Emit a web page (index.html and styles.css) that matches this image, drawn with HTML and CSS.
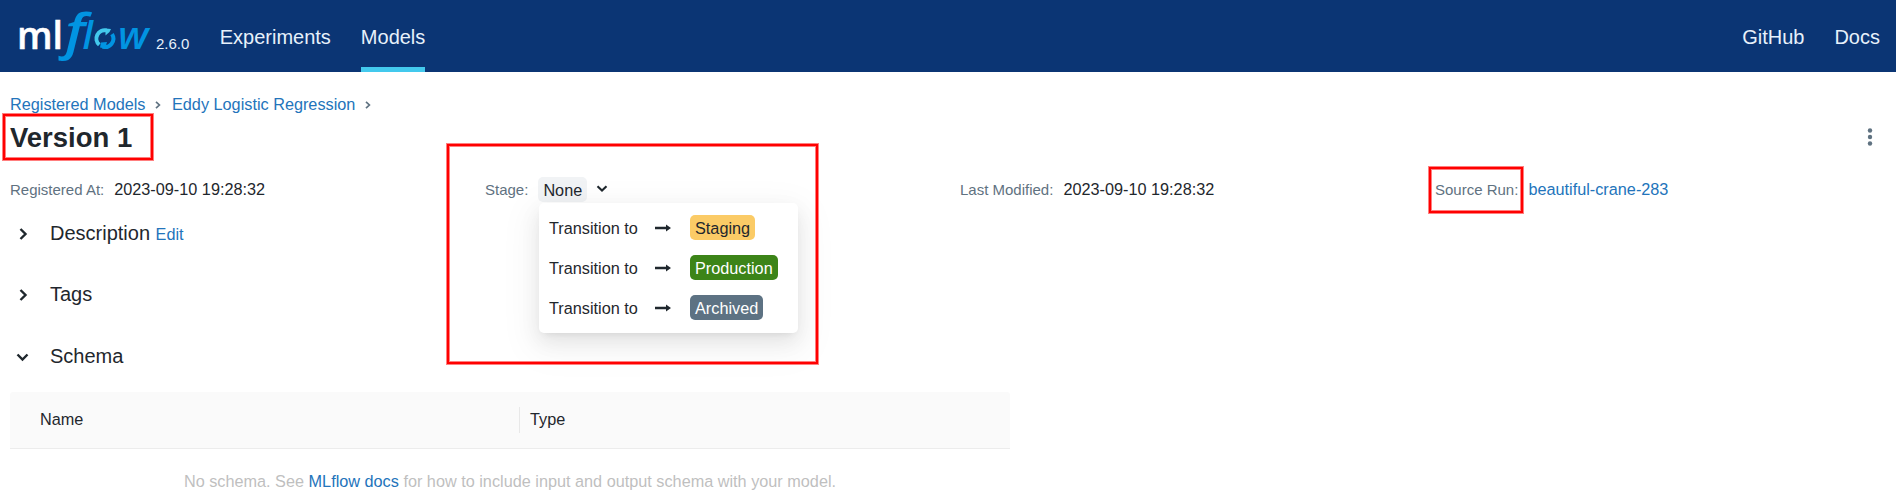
FILE: index.html
```html
<!DOCTYPE html>
<html lang="en">
<head>
<meta charset="utf-8">
<title>MLflow</title>
<link rel="stylesheet" href="styles.css">
</head>
<body>
<header class="topbar">
  <svg class="logo" width="155" height="72" viewBox="0 0 155 72" role="img" aria-label="mlflow">
    <text class="logo-ml" x="17" y="49" textLength="46" lengthAdjust="spacingAndGlyphs">ml</text>
    <text class="logo-f" transform="translate(65 48.500) scale(1.2 1)">f</text>
    <text class="logo-flow" x="82.500" y="49">l</text>
    <text class="logo-flow" x="118" y="49" textLength="30.500" lengthAdjust="spacingAndGlyphs">w</text>
    <path d="M99.300 44.800A8.300 8.300 0 0 1 106.500 30.400" fill="none" stroke="#43c9ed" stroke-width="4"/>
    <path d="M105.500 28.500l5.500.500-1.500 3-4 3.500z" fill="#43c9ed"/>
    <path d="M112 34.200A8.300 8.300 0 0 1 102.500 46.600" fill="none" stroke="#0194e2" stroke-width="4"/>
    <path d="M101 42.500l6-.500-2 6.500-5-1z" fill="#0194e2"/>
  </svg>
  <span class="release">2.6.0</span>
  <nav class="nav"><a class="nav-link">Experiments</a><a class="nav-link active">Models</a></nav>
  <nav class="nav right"><a class="nav-link">GitHub</a><a class="nav-link">Docs</a></nav>
</header>
<main class="page">
  <div class="crumbs">
    <a class="link">Registered Models</a>
    <svg class="crumb-arrow" width="6" height="8" viewBox="0 0 6 8"><path d="M1 .800l3.400 3.200L1 7.200"/></svg>
    <a class="link">Eddy Logistic Regression</a>
    <svg class="crumb-arrow" width="6" height="8" viewBox="0 0 6 8"><path d="M1 .800l3.400 3.200L1 7.200"/></svg>
  </div>
  <div class="title-row">
    <h1 class="title">Version 1</h1>
    <svg class="more" width="6" height="20" viewBox="0 0 6 20"><circle cx="3" cy="3.500" r="2.200"/><circle cx="3" cy="10" r="2.200"/><circle cx="3" cy="16.500" r="2.200"/></svg>
  </div>
  <div class="meta">
    <div class="meta-item"><span class="label">Registered At:</span><span>2023-09-10 19:28:32</span></div>
    <div class="meta-item stage"><span class="label">Stage:</span><span class="tag none">None</span>
      <svg class="chevron small" width="12" height="8" viewBox="0 0 12 8"><path d="M1.500 1.200l4.500 4.300 4.500-4.300"/></svg>
      <div class="menu">
        <div class="menu-item"><span class="move">Transition to</span><svg class="arrow" width="16" height="8" viewBox="0 0 16 8"><path d="M0 2.800h11V.400L16 4l-5 3.600V5.200H0z"/></svg><span class="tag staging">Staging</span></div>
        <div class="menu-item"><span class="move">Transition to</span><svg class="arrow" width="16" height="8" viewBox="0 0 16 8"><path d="M0 2.800h11V.400L16 4l-5 3.600V5.200H0z"/></svg><span class="tag production">Production</span></div>
        <div class="menu-item"><span class="move">Transition to</span><svg class="arrow" width="16" height="8" viewBox="0 0 16 8"><path d="M0 2.800h11V.400L16 4l-5 3.600V5.200H0z"/></svg><span class="tag archived">Archived</span></div>
      </div>
    </div>
    <div class="meta-item"><span class="label">Last Modified:</span><span>2023-09-10 19:28:32</span></div>
    <div class="meta-item"><span class="label">Source Run:</span><a class="link">beautiful-crane-283</a></div>
  </div>
  <section class="section"><svg class="chevron" width="14" height="14" viewBox="0 0 14 14"><path d="M5.500 2l5 5-5 5"/></svg><h2 class="heading">Description <a class="link edit">Edit</a></h2></section>
  <section class="section"><svg class="chevron" width="14" height="14" viewBox="0 0 14 14"><path d="M5.500 2l5 5-5 5"/></svg><h2 class="heading">Tags</h2></section>
  <section class="section"><svg class="chevron" width="14" height="14" viewBox="0 0 14 14"><path d="M2.500 4.500l5 5 5-5"/></svg><h2 class="heading">Schema</h2></section>
  <div class="table">
    <div class="thead"><div class="th">Name</div><div class="th type">Type</div></div>
    <p class="empty">No schema. See <a class="link">MLflow docs</a> for how to include input and output schema with your model.</p>
  </div>
</main>
<div class="mark mark-version"></div>
<div class="mark mark-stage"></div>
<div class="mark mark-source"></div>
</body>
</html>
```
FILE: styles.css
```css
* { box-sizing: border-box; }
body {
  margin: 0;
  height: 503px;
  overflow: hidden;
  position: relative;
  background: #fff;
  color: #1f272d;
  font: 16.25px/25px "Liberation Sans", Arial, sans-serif;
}
.topbar {
  height: 72px;
  display: flex;
  align-items: flex-start;
  padding: 0 16px 0 0;
  background: #0b3574;
  color: #e7f1fb;
}
.logo { flex: none; overflow: visible; }
.logo-ml { font: 600 38px "Open Sans", sans-serif; fill: #fff; stroke: #fff; stroke-width: .5px; }
.logo-f { font: italic 600 49px "Open Sans", sans-serif; fill: #0194e2; }
.logo-flow { font: italic 600 38px "Open Sans", sans-serif; fill: #0194e2; }
.release { width: 48px; padding: 32px 0 0 1px; font-size: 15px; line-height: 24px; }
.nav { display: flex; gap: 30px; height: 72px; margin-left: 16.7px; font-size: 20px; line-height: 74px; }
.nav.right { margin-left: auto; }
.nav-link { height: 72px; }
.nav-link.active { box-shadow: inset 0 -5px #43c9ed; }
.page { padding: 20px 10px 0; }
.link { color: #2374bb; }
.crumbs { display: flex; align-items: center; height: 25px; white-space: nowrap; }
.crumb-arrow { margin: 1px 10.5px 0 10px; fill: none; stroke: #5f7281; stroke-width: 1.7; }
.title-row { display: flex; justify-content: space-between; align-items: center; height: 40px; padding-right: 13px; }
.title { margin: 2px 0 0; font-size: 27.5px; line-height: 40px; }
.more { fill: #5f7281; }
.meta { display: grid; grid-template-columns: repeat(4, 475px); padding-top: 20px; height: 57px; }
.meta-item { display: flex; height: 25px; white-space: nowrap; }
.label { margin-right: 10px; color: #5f7281; font-size: 15px; line-height: 26px; }
.stage { position: relative; }
.tag { height: 25px; padding: 0 5px; border-radius: 5px; line-height: 26px; }
.none { background: #f1f3f5; }
.menu .tag { margin-top: -1px; }
.staging { background: #fbcb66; }
.production { background: #3c8418; color: #fff; }
.archived { background: #5d7283; color: #fff; }
.chevron { flex: none; margin-top: 2px; fill: none; stroke: #1f272d; stroke-width: 2.4; }
.chevron.small { margin: 8px 0 0 9px; stroke-width: 2.1; }
.menu {
  position: absolute;
  left: 54px;
  top: 26px;
  width: 259px;
  height: 130px;
  padding: 5px 10px;
  border-radius: 5px;
  background: #fff;
  box-shadow: 0 4px 8px -5px rgba(0,0,0,.12), 0 8px 20px rgba(0,0,0,.08), 0 11px 35px 10px rgba(0,0,0,.045);
}
.menu-item { display: flex; align-items: center; height: 40px; }
.move { width: 106px; }
.arrow { margin-right: 19px; fill: #1f272d; }
.section { display: flex; align-items: center; gap: 21px; height: 61.25px; padding-left: 5px; }
.section:first-of-type { margin-top: -11.5px; }
.heading { margin: 0; font-size: 20px; line-height: 30px; font-weight: 400; }
.edit { font-size: 16.25px; }
.table { width: 1000px; margin-top: 5.25px; }
.thead { display: flex; align-items: center; height: 57px; border-bottom: 1px solid #ececec; border-radius: 3px 3px 0 0; background: #fafafa; }
.th { width: 509px; padding-left: 30px; line-height: 25px; padding-bottom: 1px; }
.type { width: 491px; padding-left: 10px; border-left: 1px solid #e8e8e8; }
.empty { margin: 20px 0 0; color: #bfbfbf; text-align: center; }
.mark { position: absolute; border: 2px solid #f00; box-shadow: 0 0 0 1px rgba(255,0,0,.5), inset 0 0 0 1px rgba(255,0,0,.5); }
.mark-version { left: 3px; top: 114px; width: 150px; height: 46px; }
.mark-stage { left: 447px; top: 144px; width: 371px; height: 220px; }
.mark-source { left: 1429px; top: 167px; width: 94px; height: 46px; }
```
